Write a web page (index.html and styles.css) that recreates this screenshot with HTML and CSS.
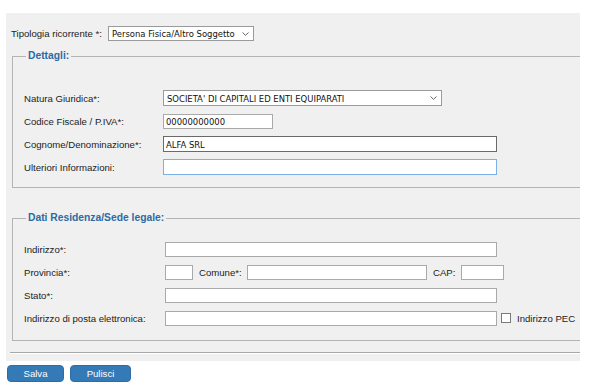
FILE: index.html
```html
<!DOCTYPE html>
<html lang="it">
<head>
<meta charset="utf-8">
<title>Ricorrente</title>
<link rel="stylesheet" href="styles.css">
</head>
<body>
<div class="panel">
  <div class="top-row">
    <label class="lbl-top">Tipologia ricorrente *:</label>
    <div class="select-wrap">
      <select class="ctl sel-tipo"><option>Persona Fisica/Altro Soggetto</option></select>
      <svg class="chev" width="7" height="4" viewBox="0 0 7 4"><path d="M0.5 0.5 L3.5 3.3 L6.5 0.5" fill="none" stroke="#555" stroke-width="0.9"/></svg>
    </div>
  </div>

  <fieldset class="fs fs-dettagli">
    <legend>Dettagli:</legend>
    <div class="row">
      <label class="lbl lbl1">Natura Giuridica*:</label>
      <div class="select-wrap">
        <select class="ctl sel-natura"><option>SOCIETA' DI CAPITALI ED ENTI EQUIPARATI</option></select>
        <svg class="chev" width="7" height="4" viewBox="0 0 7 4"><path d="M0.5 0.5 L3.5 3.3 L6.5 0.5" fill="none" stroke="#555" stroke-width="0.9"/></svg>
      </div>
    </div>
    <div class="row">
      <label class="lbl lbl1">Codice Fiscale / P.IVA*:</label>
      <input class="ctl in-cf" type="text" value="00000000000">
    </div>
    <div class="row">
      <label class="lbl lbl1">Cognome/Denominazione*:</label>
      <input class="ctl in-wide1 in-dark" type="text" value="ALFA SRL">
    </div>
    <div class="row">
      <label class="lbl lbl1">Ulteriori Informazioni:</label>
      <input class="ctl in-wide1 in-blue" type="text" value="">
    </div>
  </fieldset>

  <fieldset class="fs fs-residenza">
    <legend>Dati Residenza/Sede legale:</legend>
    <div class="row">
      <label class="lbl lbl2">Indirizzo*:</label>
      <input class="ctl in-wide2" type="text" value="">
    </div>
    <div class="row">
      <label class="lbl lbl2">Provincia*:</label>
      <input class="ctl in-prov" type="text" value="">
      <label class="lbl-inline lbl-comune">Comune*:</label>
      <input class="ctl in-comune" type="text" value="">
      <label class="lbl-inline lbl-cap">CAP:</label>
      <input class="ctl in-cap" type="text" value="">
    </div>
    <div class="row">
      <label class="lbl lbl2">Stato*:</label>
      <input class="ctl in-wide2" type="text" value="">
    </div>
    <div class="row">
      <label class="lbl lbl2">Indirizzo di posta elettronica:</label>
      <input class="ctl in-wide2" type="text" value="">
      <input class="chk" type="checkbox">
      <label class="lbl-inline lbl-pec">Indirizzo PEC</label>
    </div>
  </fieldset>

  <div class="rule"></div>
</div>

<div class="actions">
  <button class="btn btn-salva">Salva</button>
  <button class="btn btn-pulisci">Pulisci</button>
</div>
</body>
</html>
```

FILE: styles.css
```css
* { box-sizing: border-box; }

body {
  margin: 0;
  background: #ffffff;
  font-family: "Liberation Sans", Arial, sans-serif;
  font-size: 9.6px;
  color: #222222;
}

.panel {
  margin: 13px 0 0 6px;
  width: 574px;
  height: 348px;
  background: #f0f0f0;
  overflow: hidden;
  padding-top: 13px;
}

.top-row {
  display: flex;
  align-items: center;
  padding-left: 5px;
  height: 15px;
}

.lbl-top {
  width: 97px;
}

.select-wrap {
  position: relative;
  display: inline-block;
}

.chev {
  position: absolute;
  right: 5px;
  top: 6px;
  pointer-events: none;
}

.ctl {
  font-family: "DejaVu Sans Condensed", "DejaVu Sans", sans-serif;
  font-stretch: condensed;
  font-size: 9.4px;
  color: #111;
  background: #ffffff;
  border: 1px solid #a9a9a9;
  border-radius: 0;
  height: 16px;
  padding: 0 2px;
  margin: 0;
  outline: none;
  display: block;
}

select.ctl {
  appearance: none;
  -webkit-appearance: none;
  padding-left: 3px;
  border-color: #9a9a9a;
}

.sel-tipo { width: 146px; height: 15px; }
.sel-natura { width: 279px; }

.fs {
  margin: 0 0 0 6px;
  width: 600px;
  border: 1px solid #b4b4b4;
  padding: 0 0 0 11px;
}

.fs legend {
  font-size: 10.3px;
  font-weight: bold;
  color: #2d6aa3;
  padding: 0 2px;
  margin-left: 2px;
  line-height: 12px;
}

.fs-dettagli {
  margin-top: 9px;
  padding-top: 28px;
  padding-bottom: 12px;
}

.fs-residenza {
  margin-top: 24px;
  padding-top: 17px;
  padding-bottom: 14px;
}

.row {
  display: flex;
  align-items: center;
  height: 16px;
  margin-bottom: 7px;
}

.row:last-child { margin-bottom: 0; }

.lbl { flex: none; }
.lbl1 { width: 139px; }
.lbl2 { width: 141px; }

.in-cf { width: 110px; height: 15px; }
.in-wide1 { width: 334px; }
.in-wide2 { width: 332px; height: 15px; }
.in-dark { border-color: #6a6a6a; }
.in-blue { border-color: #7ab0e2; }

.in-prov { width: 28px; height: 15px; }
.lbl-comune { margin-left: 6px; width: 48px; }
.in-comune { width: 180px; height: 15px; }
.lbl-cap { margin-left: 6px; width: 28px; }
.in-cap { width: 43px; height: 15px; }

.chk {
  appearance: none;
  -webkit-appearance: none;
  width: 10px;
  height: 10px;
  margin: 0 0 0 4px;
  border: 1px solid #7a7a7a;
  background: #ffffff;
  border-radius: 0;
}

.lbl-pec { margin-left: 6px; }

.rule {
  margin: 11px 0 0 4px;
  height: 2px;
  border-top: 1px solid #a8a8a8;
  border-bottom: 1px solid #ffffff;
}

.actions {
  display: flex;
  gap: 6px;
  padding: 4px 0 0 7px;
}

.btn {
  font-family: "Liberation Sans", Arial, sans-serif;
  font-size: 9.6px;
  color: #ffffff;
  background: #337ab7;
  border: 1px solid #2e6da4;
  border-radius: 4px;
  height: 17px;
  padding: 0;
  margin: 0;
}

.btn-salva { width: 57px; }
.btn-pulisci { width: 61px; }
```
